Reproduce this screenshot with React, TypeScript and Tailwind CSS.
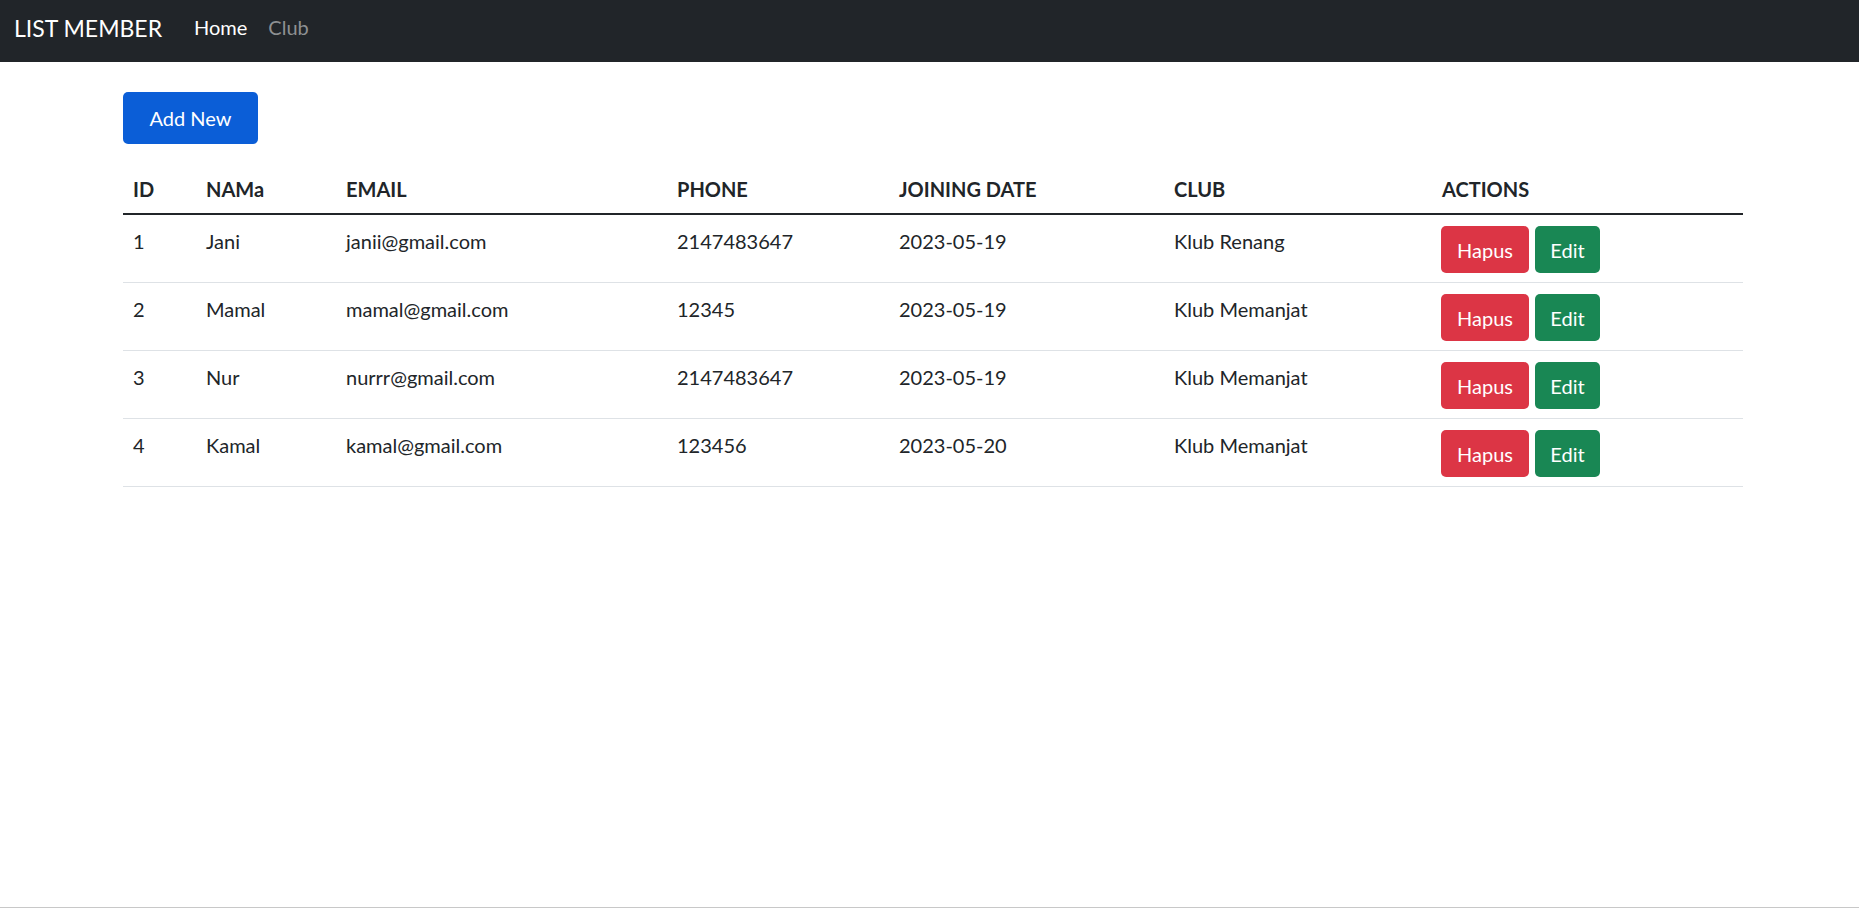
import React from "react";

const rows = [
  { id: 1, name: "Jani", email: "janii@gmail.com", phone: "2147483647", date: "2023-05-19", club: "Klub Renang" },
  { id: 2, name: "Mamal", email: "mamal@gmail.com", phone: "12345", date: "2023-05-19", club: "Klub Memanjat" },
  { id: 3, name: "Nur", email: "nurrr@gmail.com", phone: "2147483647", date: "2023-05-19", club: "Klub Memanjat" },
  { id: 4, name: "Kamal", email: "kamal@gmail.com", phone: "123456", date: "2023-05-20", club: "Klub Memanjat" },
];

export default function App() {
  return (
    <div
      className="w-[1859px] h-[908px] bg-white text-[#212529] border-b border-[#c8c8c8] overflow-hidden"
      style={{ fontFamily: '"Lato", "Noto Sans", sans-serif' }}
    >
      <nav className="h-[62px] bg-[#212529] flex items-start pt-[12px] pl-[14px]">
        <span className="text-white text-[23px] leading-[30px] mt-[1px] w-[180px]">LIST MEMBER</span>
        <span className="text-white text-[20px] leading-[30px] mr-[21px]">Home</span>
        <span className="text-[#8e9092] text-[20px] leading-[30px]">Club</span>
      </nav>
      <main className="ml-[123px] w-[1620px] pt-[30px]">
        <button className="w-[135px] h-[52px] rounded-[5px] bg-[#0b5ed7] text-white text-[20px] leading-[30px] flex items-center justify-center">
          Add New
        </button>
        <table className="mt-[20px] w-[1620px] table-fixed border-collapse text-[20px] leading-[30px]">
          <colgroup>
            <col className="w-[73px]" />
            <col className="w-[140px]" />
            <col className="w-[331px]" />
            <col className="w-[222px]" />
            <col className="w-[275px]" />
            <col className="w-[268px]" />
            <col className="w-[311px]" />
          </colgroup>
          <thead>
            <tr className="border-b-[2px] border-[#212529]">
              {["ID", "NAMa", "EMAIL", "PHONE", "JOINING DATE", "CLUB", "ACTIONS"].map((h) => (
                <th key={h} className="text-left font-bold px-[10px] pt-[10px] pb-[9px] align-top">
                  {h}
                </th>
              ))}
            </tr>
          </thead>
          <tbody>
            {rows.map((r) => (
              <tr key={r.id} className="border-b border-[#dee2e6]">
                <td className="px-[10px] pt-[11px] align-top">{r.id}</td>
                <td className="px-[10px] pt-[11px] align-top">{r.name}</td>
                <td className="px-[10px] pt-[11px] align-top">{r.email}</td>
                <td className="px-[10px] pt-[11px] align-top">{r.phone}</td>
                <td className="px-[10px] pt-[11px] align-top">{r.date}</td>
                <td className="px-[10px] pt-[11px] align-top">{r.club}</td>
                <td className="pl-[9px] pt-[11px] pb-[9px] align-top">
                  <div className="flex gap-[6px]">
                    <button className="w-[88px] h-[47px] rounded-[5px] bg-[#dc3545] text-white text-[20px] flex items-center justify-center">
                      Hapus
                    </button>
                    <button className="w-[65px] h-[47px] rounded-[5px] bg-[#198754] text-white text-[20px] flex items-center justify-center">
                      Edit
                    </button>
                  </div>
                </td>
              </tr>
            ))}
          </tbody>
        </table>
      </main>
    </div>
  );
}
